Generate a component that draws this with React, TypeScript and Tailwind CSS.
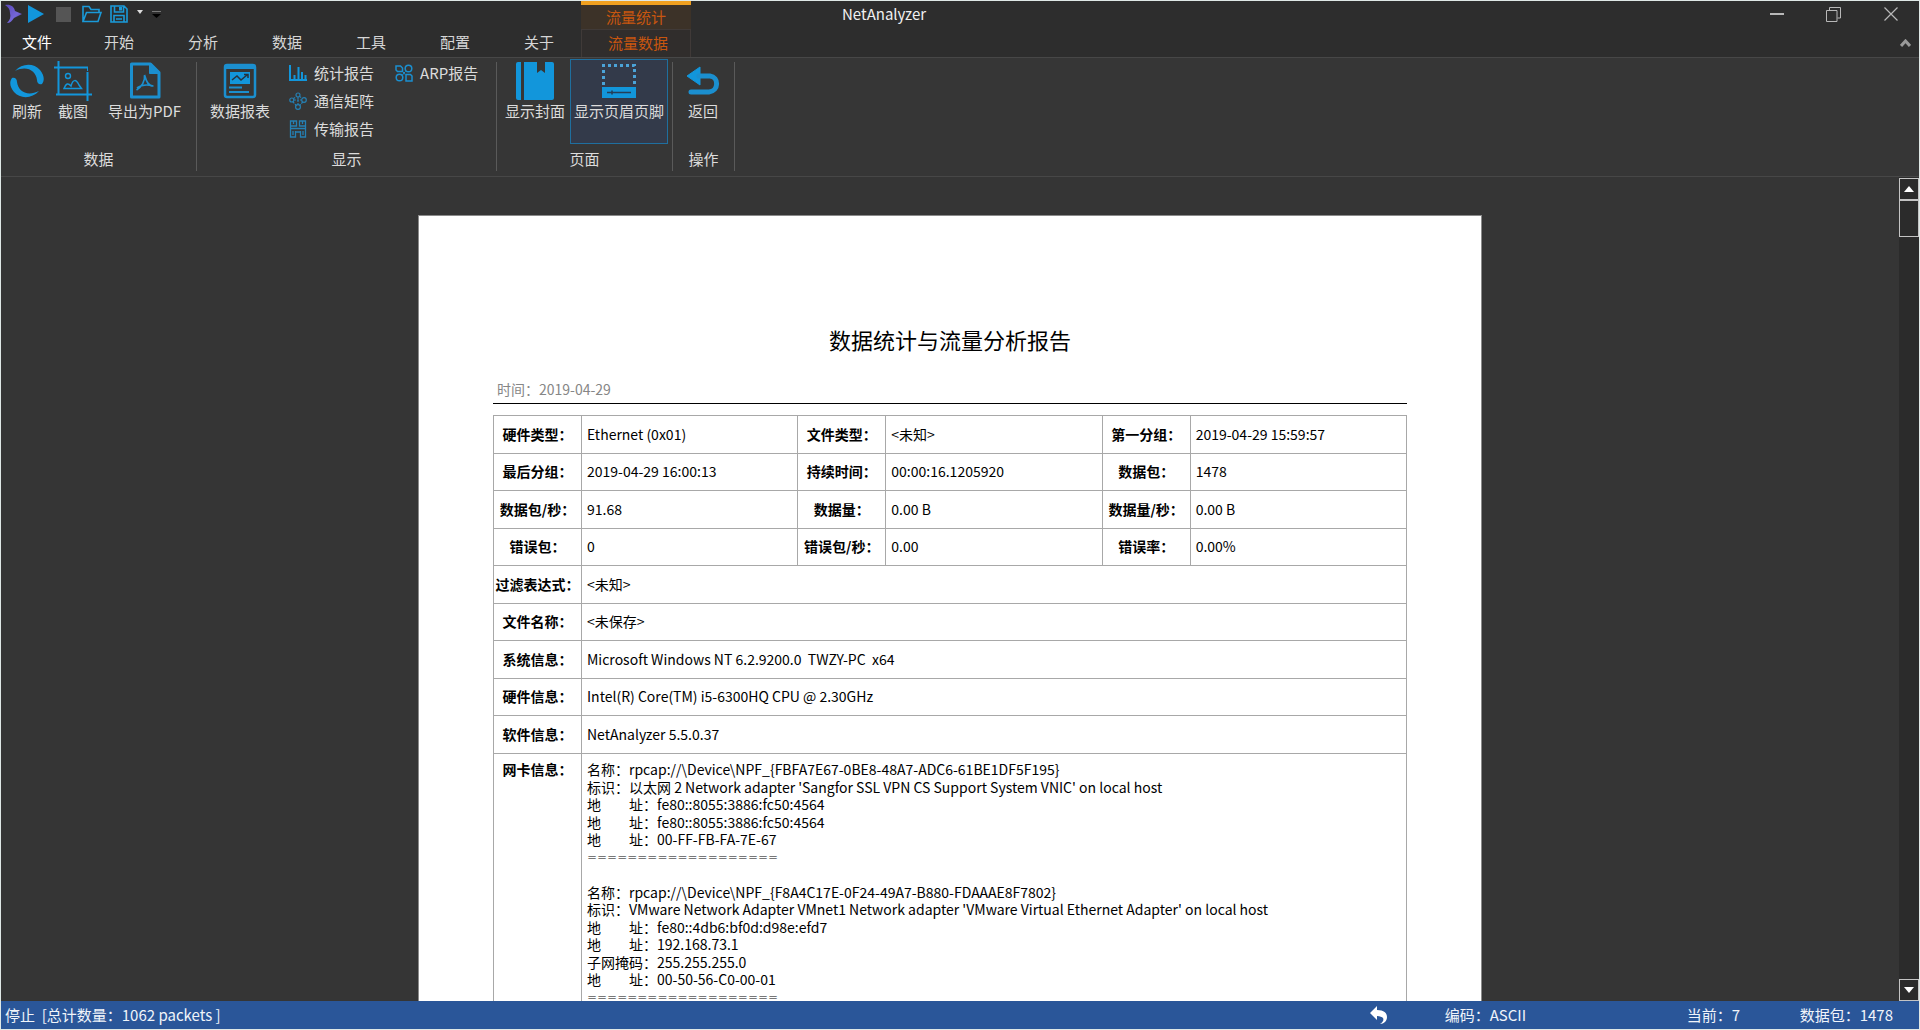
import type { ReactNode } from "react";

const tabs = ["开始", "分析", "数据", "工具", "配置", "关于"];

const summaryRows = [
  ["硬件类型：", "Ethernet (0x01)", "文件类型：", "<未知>", "第一分组：", "2019-04-29 15:59:57"],
  ["最后分组：", "2019-04-29 16:00:13", "持续时间：", "00:00:16.1205920", "数据包：", "1478"],
  ["数据包/秒：", "91.68", "数据量：", "0.00 B", "数据量/秒：", "0.00 B"],
  ["错误包：", "0", "错误包/秒：", "0.00", "错误率：", "0.00%"],
];

const detailRows = [
  ["过滤表达式：", "<未知>"],
  ["文件名称：", "<未保存>"],
  ["系统信息：", "Microsoft Windows NT 6.2.9200.0  TWZY-PC  x64"],
  ["硬件信息：", "Intel(R) Core(TM) i5-6300HQ CPU @ 2.30GHz"],
  ["软件信息：", "NetAnalyzer 5.5.0.37"],
];

const adapters = [
  [
    "名称：rpcap://\\Device\\NPF_{FBFA7E67-0BE8-48A7-ADC6-61BE1DF5F195}",
    "标识：以太网 2 Network adapter 'Sangfor SSL VPN CS Support System VNIC' on local host",
    "地　　址：fe80::8055:3886:fc50:4564",
    "地　　址：fe80::8055:3886:fc50:4564",
    "地　　址：00-FF-FB-FA-7E-67",
  ],
  [
    "名称：rpcap://\\Device\\NPF_{F8A4C17E-0F24-49A7-B880-FDAAAE8F7802}",
    "标识：VMware Network Adapter VMnet1 Network adapter 'VMware Virtual Ethernet Adapter' on local host",
    "地　　址：fe80::4db6:bf0d:d98e:efd7",
    "地　　址：192.168.73.1",
    "子网掩码：255.255.255.0",
    "地　　址：00-50-56-C0-00-01",
  ],
];

const separator = "===================";

// every adapter is closed by a separator and an empty line
const adapterLines = adapters.flatMap((lines) => [...lines, separator, ""]);

function LogoIcon() {
  return (
    <svg width="17" height="20" viewBox="0 0 17 20">
      <defs>
        <linearGradient id="logo" x1="0" y1="0" x2="1" y2="1">
          <stop offset="0" stopColor="#5a48b8" />
          <stop offset="0.6" stopColor="#7466d8" />
          <stop offset="1" stopColor="#4a3c96" />
        </linearGradient>
      </defs>
      <path d="M0 1c5-1 9 1 10 6l7 3-8 4c-2 3-4 5-7 5 3-3 4-6 3-10C5 5 3 3 0 1z" fill="url(#logo)" />
    </svg>
  );
}

function OpenIcon() {
  return (
    <svg width="20" height="18" viewBox="0 0 20 18" fill="none" stroke="#1a9ad9" strokeWidth="1.6">
      <path d="M1 16.5V1.5h6l2 3h8v3M1 16.5l3.5-9H19l-3 9z" />
    </svg>
  );
}

function SaveIcon() {
  return (
    <svg width="18" height="18" viewBox="0 0 18 18" fill="none" stroke="#1a9ad9" strokeWidth="1.6">
      <path d="M1 1h13l3 3v13H1zM4.5 1v6h9V1M4 17v-6.500h10V17M6 14h6" />
      <path d="M9 2h3v3.500H9z" fill="#1a9ad9" stroke="none" />
    </svg>
  );
}

function RefreshIcon() {
  const arc = "M5 7C12-1 24-1 30 6c4 5 5 10 2 14-3 1-5-1-5-4C26 7 17 1 5 7z";
  return (
    <svg width="34" height="34" viewBox="0 0 34 34" fill="#1296db">
      <path d={arc} />
      <path d={arc} transform="rotate(180 17 17)" />
    </svg>
  );
}

function CropIcon() {
  return (
    <svg width="38" height="40" viewBox="0 0 38 40" fill="none" stroke="#1296db">
      <path d="M4.500 0v34M0 6.500h34M33.500 11v29M2 33.500h36" strokeWidth="2" />
      <circle cx="14" cy="15" r="2.500" strokeWidth="1.400" />
      <path d="M10 27.500c2-5 4-6 7-2.500 2-7 5-7 8-1l2.500 3.500z" strokeWidth="1.500" />
      <path d="M33.500 6v4" strokeWidth="1" />
    </svg>
  );
}

function PdfIcon() {
  return (
    <svg width="32" height="38" viewBox="0 0 32 38" fill="none" stroke="#1b8fcf" strokeWidth="3">
      <path d="M2.500 2h19L30 10.500V35H2.500z" strokeLinejoin="round" />
      <path d="M20.500 2v9.500H30z" fill="#1b8fcf" strokeWidth="1" />
      <path d="M15.500 13c2 7 4 11 9 11M15.500 13c1 6-3 12-8 15M8 26c4-3 9-4 16-2" strokeWidth="1.700" />
    </svg>
  );
}

function ReportIcon() {
  return (
    <svg width="34" height="36" viewBox="0 0 34 36">
      <rect x="2" y="2" width="30" height="32" rx="2" fill="none" stroke="#1b8fcf" strokeWidth="2.500" />
      <path d="M2 2h30v4H2z" fill="#1b8fcf" />
      <path d="M7 9h20v12H7z" fill="#1296db" />
      <path d="M9 17l5-4 4 4 6-5M21 11.500h4V15" fill="none" stroke="#26333d" strokeWidth="1.500" />
      <path d="M6 24.500h13M6 29h20" stroke="#1b8fcf" strokeWidth="2" />
    </svg>
  );
}

function StatsIcon() {
  return (
    <svg width="18" height="18" viewBox="0 0 18 18" stroke="#1296db" strokeWidth="2" fill="none">
      <path d="M1 1v15h17M5.500 11v5M9.500 3v13M13 8v8M16.500 11v5" />
    </svg>
  );
}

function MatrixIcon() {
  return (
    <svg width="18" height="18" viewBox="0 0 18 18" stroke="#2580b4" strokeWidth="1.200" fill="none">
      <circle cx="9" cy="3" r="2" />
      <circle cx="2.800" cy="8" r="2" />
      <circle cx="15" cy="8" r="2.300" />
      <circle cx="9" cy="15" r="2.400" />
      <path d="M4.500 6.500l3-2M10.500 4.500l3 2M4 9.800l3.200 3.700M13.700 10l-3 3.500M9 5v7.500M5 8h7.500" strokeDasharray="2 1" />
    </svg>
  );
}

function TransferIcon() {
  return (
    <svg width="18" height="18" viewBox="0 0 18 18" stroke="#2580b4" strokeWidth="1.300" fill="none">
      <path d="M1.500 1h6v5h-6zM10.500 1h6v5h-6zM1.500 6v11h5v-6M16.500 6v11h-5v-6M1.500 8.500h15M4 11v4M14 11v4M4.500 1v3M13.500 1v3M6.500 12h5" />
    </svg>
  );
}

function ArpIcon() {
  return (
    <svg width="18" height="18" viewBox="0 0 18 18" stroke="#1b8fcf" strokeWidth="1.500" fill="none">
      <path d="M1 2h4.500l2 2v3.500H2.500L1 6z" />
      <circle cx="13.500" cy="4.500" r="3.300" />
      <circle cx="4.500" cy="13.500" r="3.300" />
      <path d="M11 10.500h4.500l1.500 1.500v5h-6z" />
      <path d="M7.500 7.500l1.500 1.500 1.500-1.500M10 10.500L9 9l-1.500 2" strokeWidth="1" />
    </svg>
  );
}

function CoverIcon() {
  return (
    <svg width="38" height="40" viewBox="0 0 38 40" fill="#1296db">
      <path d="M2 1h3v38H2q-2 0-2-2V3q0-2 2-2z" />
      <path d="M8 1h13v11l4-3 4 3V1h7q2 0 2 2v34q0 2-2 2H8z" />
    </svg>
  );
}

function FooterIcon() {
  return (
    <svg width="36" height="36" viewBox="0 0 36 36" fill="none">
      <path d="M2.500 22V2.500h31V22" stroke="#4ba3d8" strokeWidth="3" strokeDasharray="3 3" />
      <path d="M1 24h34v11H1z" fill="#1296db" />
      <path d="M6 29.500h24M11 27.500v4" stroke="#243f58" strokeWidth="1.600" />
    </svg>
  );
}

function BackIcon() {
  return (
    <svg width="34" height="30" viewBox="0 0 34 30">
      <path d="M1 10L14 1v18z" fill="#1296db" stroke="#1296db" strokeLinejoin="round" />
      <path d="M13 10h11c9 1 9 15-1 16H5" fill="none" stroke="#1b8fcf" strokeWidth="5" strokeLinecap="round" />
    </svg>
  );
}

function BigButton({ icon, label, className }: { icon: ReactNode; label: string; className: string }) {
  return (
    <button className={`flex h-[85px] flex-col items-center border whitespace-nowrap ${className}`}>
      <span className="flex h-[41px] items-center">{icon}</span>
      <span className="leading-5">{label}</span>
    </button>
  );
}

function SmallButton({ icon, label }: { icon: ReactNode; label: string }) {
  return (
    <button className="flex h-7 items-center gap-[7px] px-[5px] whitespace-nowrap">
      {icon}
      <span className="leading-5">{label}</span>
    </button>
  );
}

function Group({ title, className, children }: { title: string; className: string; children: ReactNode }) {
  return (
    <section className={`flex shrink-0 flex-col pt-px ${className}`}>
      <div className="flex h-[90px] pl-[3px]">{children}</div>
      <h2 className="text-center leading-5">{title}</h2>
    </section>
  );
}

function Divider() {
  return <div className="mt-1 h-[109px] w-px shrink-0 bg-[#5a5a5a]" />;
}

function Header() {
  return (
    <header className="shrink-0 bg-[#2d2d2d] text-[#d6d6d6]">
      <div className="flex h-7">
        <div className="flex w-[580px] shrink-0 items-center pb-[2px] pl-1">
          <LogoIcon />
          <button aria-label="开始捕获" className="ml-[6px]">
            <svg width="16" height="18" viewBox="0 0 16 18"><path d="M0 0l16 9-16 9z" fill="#1296db" /></svg>
          </button>
          <button aria-label="停止捕获" className="ml-3 size-[15px] bg-[#555]" />
          <button aria-label="打开" className="ml-[11px]"><OpenIcon /></button>
          <button aria-label="保存" className="ml-2"><SaveIcon /></button>
          <button aria-label="保存选项" className="mb-1 ml-[9px]">
            <svg width="6" height="4" viewBox="0 0 6 4"><path d="M0 0h6L3 4z" fill="#ddd" /></svg>
          </button>
          <button aria-label="自定义快速访问工具栏" className="ml-[9px]">
            <svg width="9" height="7" viewBox="0 0 9 7"><path d="M0 0h9v1H0z" fill="#777" /><path d="M0 3h9L4.500 7z" fill="#000" /></svg>
          </button>
        </div>
        <div className="w-[110px] shrink-0 border-t-4 border-[#f0a020] bg-[#3c3228] text-center leading-6 text-[#c8560f]">
          流量统计
        </div>
        <h1 className="min-w-0 flex-1 pl-[151px] leading-[26px] text-[#f0f0f0]">NetAnalyzer</h1>
        <div className="flex pb-[2px] text-[#b8b8b8]">
          <button aria-label="最小化" className="flex w-[57px] items-center justify-center">
            <svg width="14" height="14" viewBox="0 0 14 14"><path d="M0 7h14" stroke="currentColor" strokeWidth="2" /></svg>
          </button>
          <button aria-label="还原" className="flex w-[57px] items-center justify-center">
            <svg width="15" height="15" viewBox="0 0 15 15" fill="none" stroke="currentColor"><path d="M.5 3.500h10.500v11H.5zM3.500 3V.5h11v10.500H11.500" /></svg>
          </button>
          <button aria-label="关闭" className="flex w-[57px] items-center justify-center">
            <svg width="14" height="14" viewBox="0 0 14 14"><path d="M.5.5l13 13M13.500.5l-13 13" stroke="currentColor" strokeWidth="1.200" /></svg>
          </button>
        </div>
      </div>
      <nav className="flex h-7 leading-[26px]">
        <button className="mr-1 w-[72px] pb-[2px] text-white">文件</button>
        {tabs.map((tab) => (
          <button key={tab} className="w-[84px] pb-[2px]">{tab}</button>
        ))}
        <button className="w-[110px] border-x border-t border-[#403a38] bg-[#302d2c] pb-[2px] pl-1 text-[#c8560f]">流量数据</button>
        <button aria-label="折叠功能区" className="mr-2 ml-auto">
          <svg width="11" height="8" viewBox="0 0 11 8"><path d="M1 7l4.500-5L10 7" fill="none" stroke="#999" strokeWidth="3" /></svg>
        </button>
      </nav>
    </header>
  );
}

function Ribbon() {
  return (
    <div className="flex h-[120px] shrink-0 border-y border-[#474747] bg-[#363636] text-[#dcdcdc]">
      <Group title="数据" className="w-[195px]">
        <BigButton icon={<RefreshIcon />} label="刷新" className="w-[46px] border-transparent" />
        <BigButton icon={<CropIcon />} label="截图" className="w-[46px] border-transparent" />
        <BigButton icon={<PdfIcon />} label="导出为PDF" className="w-[97px] border-transparent" />
      </Group>
      <Divider />
      <Group title="显示" className="w-[299px]">
        <BigButton icon={<ReportIcon />} label="数据报表" className="w-20 border-transparent" />
        <div className="ml-1 flex flex-col">
          <SmallButton icon={<StatsIcon />} label="统计报告" />
          <SmallButton icon={<MatrixIcon />} label="通信矩阵" />
          <SmallButton icon={<TransferIcon />} label="传输报告" />
        </div>
        <div className="ml-[11px]">
          <SmallButton icon={<ArpIcon />} label="ARP报告" />
        </div>
      </Group>
      <Divider />
      <Group title="页面" className="w-[175px]">
        <BigButton icon={<CoverIcon />} label="显示封面" className="w-[70px] border-transparent" />
        <BigButton icon={<FooterIcon />} label="显示页眉页脚" className="w-[98px] border-[#1f6f9f] bg-[#333a4a]" />
      </Group>
      <Divider />
      <Group title="操作" className="w-[61px]">
        <BigButton icon={<BackIcon />} label="返回" className="w-[54px] border-transparent" />
      </Group>
      <Divider />
    </div>
  );
}

function Report() {
  return (
    <article className="mx-auto w-[1064px] border border-[#8a8a8a] bg-white px-[74px] pt-[109px] text-sm text-black">
      <h2 className="text-center text-[22px] leading-7">数据统计与流量分析报告</h2>
      <p className="mt-[26px] border-b border-black pb-1 pl-1 leading-5 text-[#868686]">时间：2019-04-29</p>
      <table className="mt-[11px] w-full table-fixed border-collapse leading-5 [&_td]:border [&_td]:border-[#a8a8a8] [&_td]:pb-[2px] [&_td]:pl-[5px] [&_th]:border [&_th]:border-[#a8a8a8] [&_th]:pb-[2px] [&_th]:whitespace-nowrap">
        <colgroup>
          <col className="w-[88px]" />
          <col />
          <col className="w-[88px]" />
          <col />
          <col className="w-[88px]" />
          <col />
        </colgroup>
        <tbody>
          {summaryRows.map((cells) => (
            <tr key={cells[0]} className="odd:h-[38px] even:h-[37px]">
              {cells.map((cell, i) => (i % 2 === 0 ? <th key={i}>{cell}</th> : <td key={i}>{cell}</td>))}
            </tr>
          ))}
          {detailRows.map(([label, value]) => (
            <tr key={label} className="odd:h-[38px] even:h-[37px]">
              <th>{label}</th>
              <td colSpan={5} className="whitespace-pre">{value}</td>
            </tr>
          ))}
          <tr className="align-top">
            <th className="pt-[5px]">网卡信息：</th>
            <td colSpan={5} className="pt-[7px] whitespace-pre">
              {adapterLines.map((line, i) => (
                <div
                  key={i}
                  className={`odd:h-[17px] odd:leading-[17px] even:h-[18px] even:leading-[18px] ${line === separator ? "font-['DejaVu_Sans'] text-xs font-extralight" : ""}`}
                >
                  {line}
                </div>
              ))}
            </td>
          </tr>
        </tbody>
      </table>
    </article>
  );
}

function ScrollBar() {
  return (
    <div className="flex w-5 shrink-0 flex-col bg-[#2b2b2b] pt-px">
      <button aria-label="向上滚动" className="flex h-[22px] items-center justify-center border border-[#c4c4c4]">
        <svg width="10" height="6" viewBox="0 0 10 6"><path d="M0 6h10L5 0z" fill="#fff" /></svg>
      </button>
      <div className="h-[37px] border border-[#c4c4c4]" />
      <button aria-label="向下滚动" className="mt-auto flex h-[22px] items-center justify-center border border-[#c4c4c4]">
        <svg width="10" height="6" viewBox="0 0 10 6"><path d="M0 0h10L5 6z" fill="#fff" /></svg>
      </button>
    </div>
  );
}

function StatusBar() {
  return (
    <footer className="flex h-7 shrink-0 items-center bg-[#2a5699] pr-[26px] pl-1 leading-7 whitespace-pre text-[#f0f4fa]">
      <span>停止  [总计数量：1062 packets ]</span>
      <button aria-label="返回" className="ml-auto">
        <svg width="17" height="18" viewBox="0 0 17 18"><path d="M0 7l7-7v4c7 0 10 3 10 7 0 4-3 7-7 7 3-2 4-4 3-6-1-1-3-2-6-2v4z" fill="#fff" /></svg>
      </button>
      <span className="ml-[58px] w-[242px]">编码：ASCII</span>
      <span className="w-[113px]">当前：7</span>
      <span>数据包：1478</span>
    </footer>
  );
}

export default function App() {
  return (
    <div className="flex h-screen flex-col overflow-hidden border border-[#dfe8e6] bg-[#353535] font-['Noto_Sans_CJK_SC',sans-serif] text-[15px]">
      <Header />
      <Ribbon />
      <div className="flex min-h-0 flex-1">
        <main className="min-w-0 flex-1 overflow-hidden pt-[38px]">
          <Report />
        </main>
        <ScrollBar />
      </div>
      <StatusBar />
    </div>
  );
}
